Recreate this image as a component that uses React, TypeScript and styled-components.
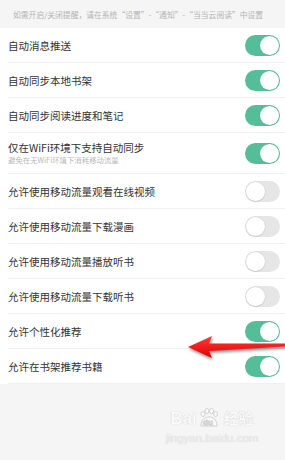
import React from 'react';
import styled, { createGlobalStyle } from 'styled-components';

const GlobalStyle = createGlobalStyle`
  html, body {
    margin: 0;
    padding: 0;
    background: #f5f5f5;
  }
  * {
    box-sizing: border-box;
  }
`;

const Page = styled.div`
  position: relative;
  width: 285px;
  height: 460px;
  overflow: hidden;
  background: #f5f5f5;
  font-family: "Noto Sans CJK SC", "Noto Sans", sans-serif;
`;

const Notice = styled.div`
  height: 28px;
  padding-left: 13px;
  display: flex;
  align-items: center;
  font-size: 7.8px;
  color: #b4b4b4;
  white-space: nowrap;
`;

const List = styled.div`
  background: #ffffff;
`;

const Row = styled.div<{ $tall?: boolean }>`
  display: flex;
  align-items: center;
  justify-content: space-between;
  height: ${(p) => (p.$tall ? 41 : 35)}px;
  margin-left: 8px;
  padding-right: 5px;
  border-bottom: 1px solid #efefef;
`;

const Labels = styled.div`
  display: flex;
  flex-direction: column;
`;

const Title = styled.span`
  font-size: 10.5px;
  line-height: 13px;
  color: #333333;
`;

const Sub = styled.span`
  font-size: 7.4px;
  line-height: 10px;
  margin-top: 1px;
  color: #b8b8b8;
`;

const Track = styled.div<{ $on: boolean }>`
  position: relative;
  width: 35px;
  height: 21px;
  border-radius: 11px;
  background: ${(p) => (p.$on ? '#55bd97' : '#e6e6e6')};
  flex-shrink: 0;
`;

const Knob = styled.div<{ $on: boolean }>`
  position: absolute;
  top: 1px;
  left: ${(p) => (p.$on ? '15px' : '1px')};
  width: 19px;
  height: 19px;
  border-radius: 50%;
  background: #ffffff;
  box-shadow: ${(p) => (p.$on ? '0 0 1px rgba(0,0,0,0.15)' : '0 0 0 0.5px #d0d0d0, 0 1px 1px rgba(0,0,0,0.15)')};
`;

const Arrow = styled.svg`
  position: absolute;
  left: 180px;
  top: 330px;
  filter: drop-shadow(1px 2px 1.5px rgba(0, 0, 0, 0.45));
`;

const Watermark = styled.div`
  position: absolute;
  left: 168px;
  top: 408px;
  width: 88px;
  display: flex;
  flex-direction: column;
  align-items: center;
  color: #fafafa;
  text-shadow: 0 0 1px #bdbdbd;
  font-family: "Liberation Sans", "Noto Sans CJK SC", sans-serif;
`;

const Brand = styled.div`
  display: flex;
  align-items: flex-end;
  font-size: 17px;
  font-weight: bold;
  line-height: 18px;
`;

const Domain = styled.div`
  font-size: 11.5px;
  line-height: 12px;
  margin-top: 4px;
  color: #f0f0f0;
  text-shadow: 0 0 1px #c4c4c4;
`;

type Item = { title: string; sub?: string; on: boolean };

const items: Item[] = [
  { title: '自动消息推送', on: true },
  { title: '自动同步本地书架', on: true },
  { title: '自动同步阅读进度和笔记', on: true },
  { title: '仅在WiFi环境下支持自动同步', sub: '避免在无WiFi环境下消耗移动流量', on: true },
  { title: '允许使用移动流量观看在线视频', on: false },
  { title: '允许使用移动流量下载漫画', on: false },
  { title: '允许使用移动流量播放听书', on: false },
  { title: '允许使用移动流量下载听书', on: false },
  { title: '允许个性化推荐', on: true },
  { title: '允许在书架推荐书籍', on: true },
];

const Toggle = ({ on }: { on: boolean }) => (
  <Track $on={on}>
    <Knob $on={on} />
  </Track>
);

const App = () => {
  return (
    <Page>
      <GlobalStyle />
      <Notice>如需开启/关闭提醒，请在系统“设置”-“通知”-“当当云阅读”中设置</Notice>
      <List>
        {items.map((it) => (
          <Row key={it.title} $tall={!!it.sub}>
            <Labels>
              <Title>{it.title}</Title>
              {it.sub && <Sub>{it.sub}</Sub>}
            </Labels>
            <Toggle on={it.on} />
          </Row>
        ))}
      </List>
      <Watermark>
        <Brand>
          Bai
          <svg width="24" height="20" viewBox="0 0 22 20">
            <g fill="#fafafa" stroke="#c8c8c8" strokeWidth="0.8">
              <ellipse cx="5" cy="6" rx="2" ry="2.5" />
              <ellipse cx="9" cy="3" rx="2" ry="2.5" />
              <ellipse cx="13.5" cy="3" rx="2" ry="2.5" />
              <ellipse cx="17.5" cy="6" rx="2" ry="2.5" />
              <path d="M3 18 C3 11 8 9 11 9 C14 9 19 11 19 18 Z" />
            </g>
            <text x="5" y="17" fontSize="8" fontWeight="bold" fill="#f4f4f4" stroke="#c8c8c8" strokeWidth="0.3">du</text>
          </svg>
          <span style={{ fontSize: 15, marginLeft: 3 }}>经验</span>
        </Brand>
        <Domain>jingyan.baidu.com</Domain>
      </Watermark>
      <Arrow width="105" height="35" viewBox="0 0 105 35">
        <defs>
          <linearGradient id="arrowFill" x1="0" y1="0" x2="0" y2="1">
            <stop offset="0" stopColor="#ff3a3a" />
            <stop offset="1" stopColor="#e00000" />
          </linearGradient>
        </defs>
        <polygon
          points="8,17 32,6 29,13.5 105,13.5 105,16.5 29,21 32,28"
          fill="url(#arrowFill)"
        />
      </Arrow>
    </Page>
  );
};

export default App;
